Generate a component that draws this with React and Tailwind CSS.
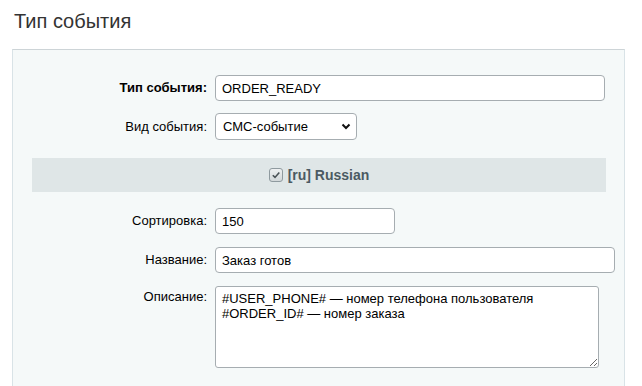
import React from "react";

function Label({ children, bold }) {
  return (
    <div className={`w-[194px] shrink-0 text-right text-[13px] text-[#000] ${bold ? "font-bold" : ""}`}>
      {children}
    </div>
  );
}

const inputCls =
  "ml-[8px] h-[26px] bg-white border border-[#a6adb1] rounded-[4px] px-[6px] text-[13px] text-black outline-none font-['Liberation_Sans',Arial,sans-serif]";

export default function App() {
  return (
    <div className="w-[642px] h-[386px] overflow-hidden bg-white text-[13px] font-['Liberation_Sans',Arial,sans-serif] text-black">
      <h1 className="pl-[14px] pt-[9px] h-[49px] text-[20px] leading-[24px] text-[#333]">Тип события</h1>
      <div className="ml-[12px] w-[613px] h-[400px] bg-[#f5f9f9] border-t border-t-[#cdd4d7] border-l border-l-[#d9e3e7] border-r border-r-[#d9e3e7] pt-[25px]">
        <div className="flex items-center h-[26px]">
          <Label bold>Тип события:</Label>
          <input readOnly value="ORDER_READY" className={`${inputCls} w-[390px]`} />
        </div>
        <div className="flex items-center h-[27px] mt-[12px]">
          <Label>Вид события:</Label>
          <div className="relative ml-[8px]">
            <select
              defaultValue="sms"
              className="appearance-none w-[142px] h-[27px] bg-white border border-[#a6adb1] rounded-[4px] pl-[7px] text-[13px] text-black outline-none font-['Liberation_Sans',Arial,sans-serif]"
            >
              <option value="sms">СМС-событие</option>
            </select>
            <svg className="absolute right-[6px] top-[10px] pointer-events-none" width="10" height="7" viewBox="0 0 10 7">
              <path d="M1.5 1.5 L5 5 L8.5 1.5" fill="none" stroke="#111" strokeWidth="2" />
            </svg>
          </div>
        </div>
        <div className="mt-[18px] ml-[19px] w-[574px] h-[34px] bg-[#dfe6e7] flex items-center justify-center gap-[5px]">
          <span className="w-[14px] h-[14px] rounded-[3px] border border-[#8f9a9f] bg-[linear-gradient(#eef0f1,#d2d7d9)] flex items-center justify-center">
            <svg width="10" height="10" viewBox="0 0 10 10">
              <path d="M1.8 5.2 L4 7.4 L8.3 2.4" fill="none" stroke="#4a5256" strokeWidth="1.6" />
            </svg>
          </span>
          <span className="font-bold text-[14px] text-[#4b5a62]">[ru] Russian</span>
        </div>
        <div className="flex items-center h-[26px] mt-[16px]">
          <Label>Сортировка:</Label>
          <input readOnly value="150" className={`${inputCls} w-[180px]`} />
        </div>
        <div className="flex items-center h-[26px] mt-[13px]">
          <Label>Название:</Label>
          <input readOnly value="Заказ готов" className={`${inputCls} w-[400px]`} />
        </div>
        <div className="flex items-start mt-[13px]">
          <div className="pt-[1px]">
            <Label>Описание:</Label>
          </div>
          <textarea
            readOnly
            value={"#USER_PHONE# — номер телефона пользователя\n#ORDER_ID# — номер заказа"}
            className="ml-[8px] w-[384px] h-[82px] bg-white border border-[#a6adb1] rounded-[3px] px-[6px] pt-[4px] text-[13px] leading-[15px] text-black outline-none font-['Liberation_Sans',Arial,sans-serif]"
          />
        </div>
      </div>
    </div>
  );
}
